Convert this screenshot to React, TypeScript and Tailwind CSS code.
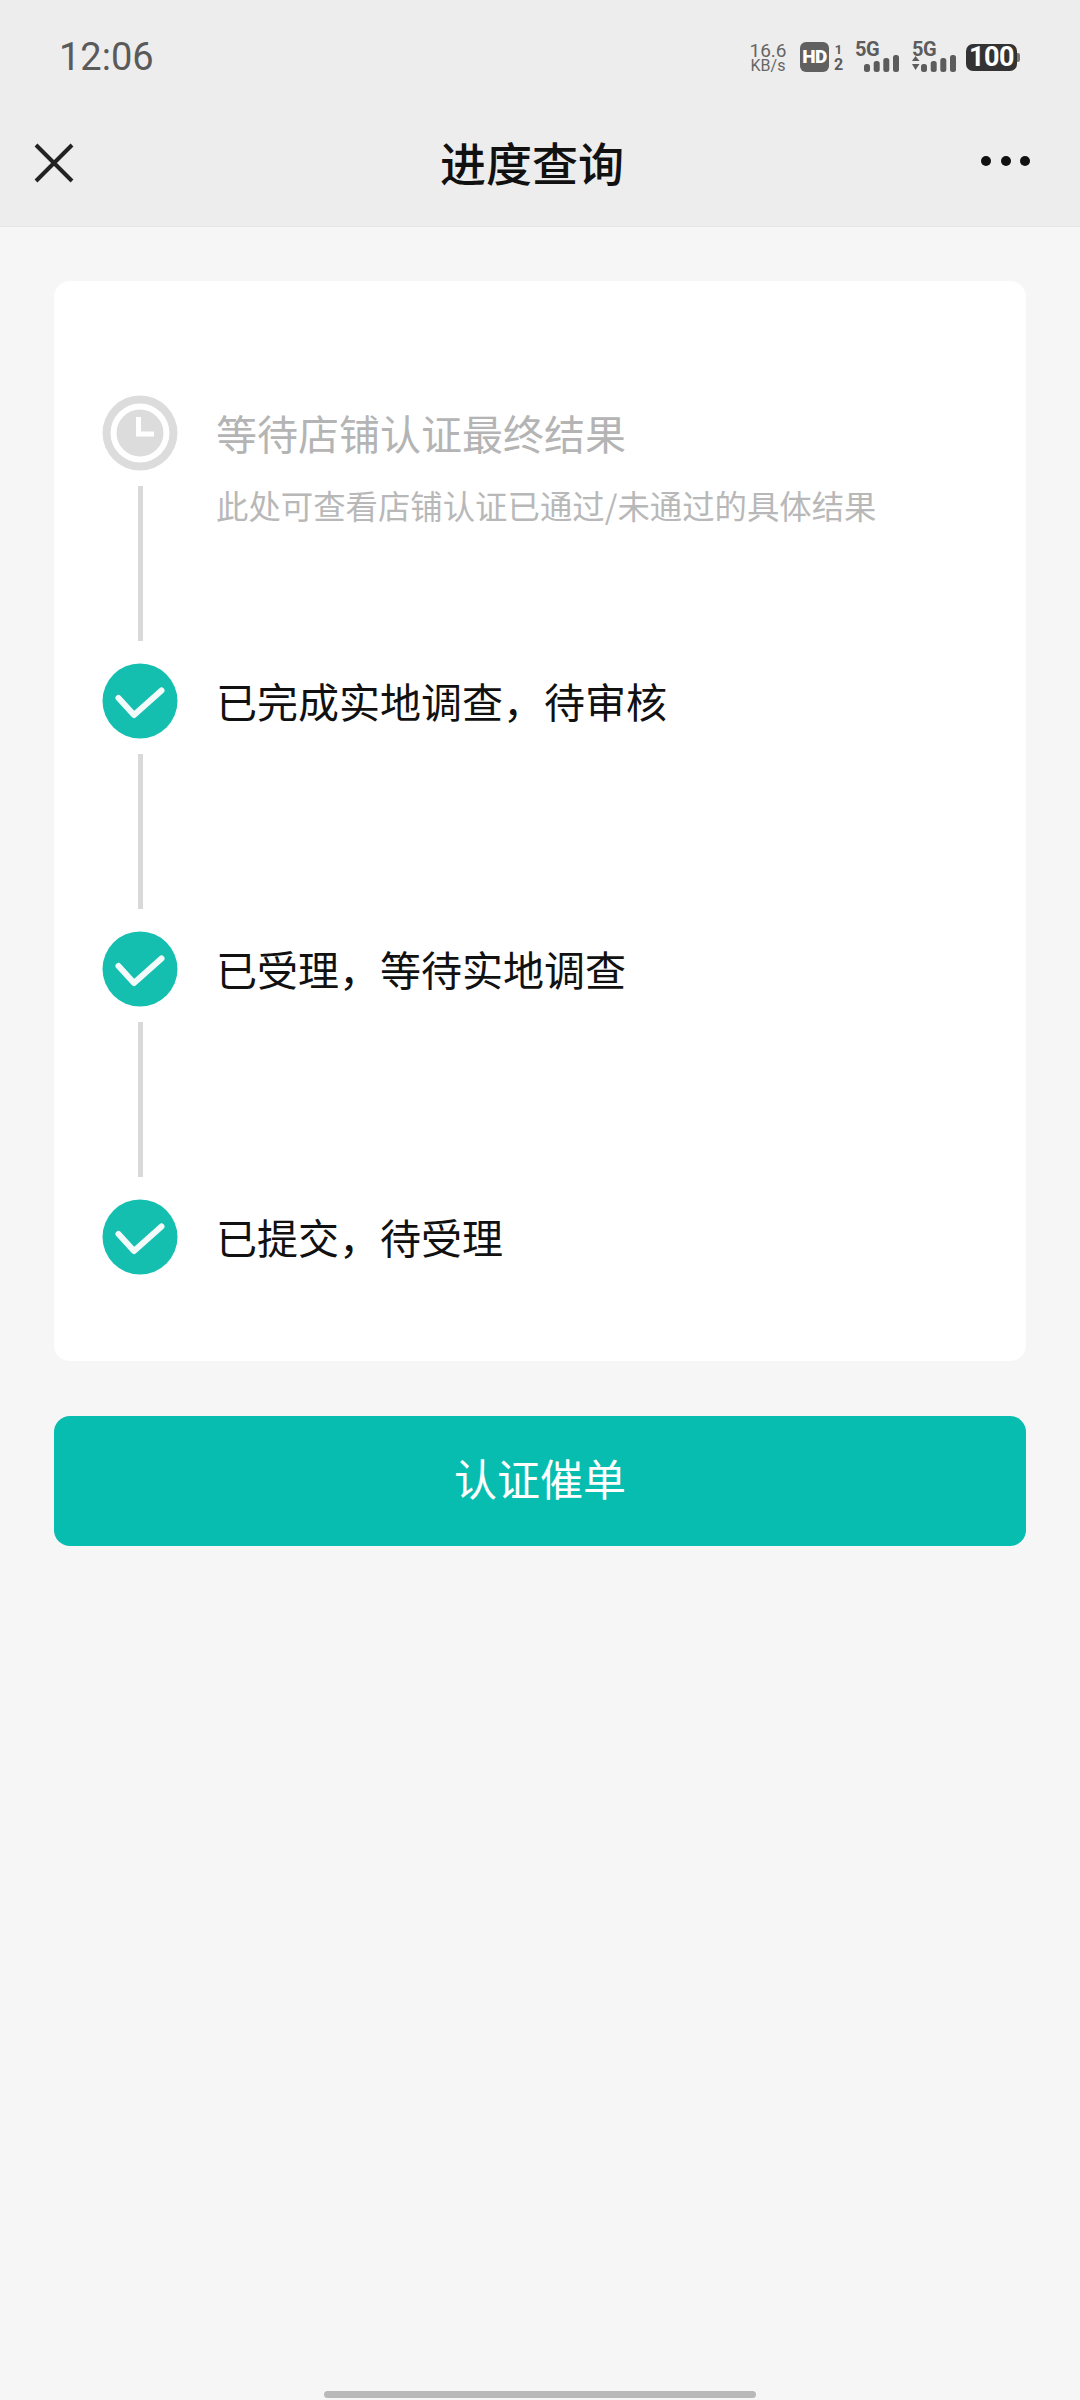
import React from 'react';

const CJK = '[font-family:"Noto_Sans_CJK_SC","Liberation_Sans",sans-serif]';

const Signal: React.FC<{ arrows?: boolean }> = ({ arrows }) => (
  <div className="flex flex-col w-[44px] h-[30px]">
    <div className="h-[14px] text-[20px] leading-[14px] font-bold text-[#5c5c5c] [font-family:Roboto,sans-serif] tracking-[-0.5px]">5G</div>
    <svg width="44" height="17" viewBox="0 0 44 17" className="mt-[-1px]">
      {arrows && (
        <g fill="#5c5c5c">
          <path d="M0 6 L3.5 1 L7.5 6 Z" />
          <path d="M0 9 L7.5 9 L3.5 15 Z" />
        </g>
      )}
      <rect x="9" y="9" width="6" height="8" rx="2.5" fill="#5c5c5c" />
      <rect x="18.7" y="6" width="6" height="11" rx="2.5" fill="#5c5c5c" />
      <rect x="28.3" y="3" width="6" height="14" rx="2.5" fill="#5c5c5c" />
      <rect x="38" y="0" width="6" height="17" rx="2.5" fill="#5c5c5c" />
    </svg>
  </div>
);

const StatusBar: React.FC = () => (
  <div className="h-[114px] flex items-center justify-between pl-[59px] pr-[60px]">
    <span className="text-[38px] leading-none text-[#5a5a5a] [font-family:Roboto,sans-serif]">12:06</span>
    <div className="flex items-center h-[30px]">
      <div className="w-[36px] flex flex-col items-center text-[#666] [font-family:Roboto,sans-serif] leading-none">
        <span className="text-[19px] leading-[17px]">16.6</span>
        <span className="text-[16px] leading-[14px]">KB/s</span>
      </div>
      <div className="ml-[14px] w-[29px] h-[30px] rounded-[6px] bg-[#606060] flex items-center justify-center text-white text-[19px] font-black tracking-[-0.5px] [font-family:Roboto,sans-serif]">
        HD
      </div>
      <div className="ml-[3px] w-[13px] flex flex-col items-center text-[#5c5c5c] font-bold [font-family:Roboto,sans-serif]">
        <span className="text-[13px] leading-[15px]">1</span>
        <span className="text-[16px] leading-[15px]">2</span>
      </div>
      <div className="ml-[10px]">
        <Signal />
      </div>
      <div className="ml-[13px]">
        <Signal arrows />
      </div>
      <div className="ml-[10px] flex items-center">
        <div className="w-[51px] h-[27px] rounded-[7px] bg-[#333] flex items-center justify-center text-white text-[27px] font-bold leading-none tracking-[-0.5px] [font-family:Roboto,sans-serif]">
          100
        </div>
        <div className="w-[3px] h-[9px] rounded-r-[2px] bg-[#777]" />
      </div>
    </div>
  </div>
);

const NavBar: React.FC = () => (
  <div className="h-[113px] flex items-center justify-between relative border-b border-[#e4e4e4] pb-[16px]">
    <svg width="40" height="40" viewBox="0 0 40 40" className="ml-[34px] mt-[2px]" fill="none" stroke="#222" strokeWidth="4">
      <path d="M2 2 L38 38 M38 2 L2 38" />
    </svg>
    <span className={`${CJK} absolute left-0 w-[1064px] text-center text-[46px] leading-none font-medium text-[#111] mt-[-2px]`}>进度查询</span>
    <div className="flex gap-[9.5px] mr-[50px] mt-[-3px]">
      <span className="w-[10px] h-[10px] rounded-full bg-[#111]" />
      <span className="w-[10px] h-[10px] rounded-full bg-[#111]" />
      <span className="w-[10px] h-[10px] rounded-full bg-[#111]" />
    </div>
  </div>
);

const ClockIcon: React.FC = () => (
  <svg width="76" height="76" viewBox="0 0 76 76">
    <circle cx="38" cy="38" r="37.5" fill="#dcdcdc" />
    <circle cx="38" cy="38" r="29.5" fill="#fff" />
    <circle cx="38" cy="38" r="23.5" fill="#dcdcdc" />
    <path d="M36.5 22 V39 H52" fill="none" stroke="#fff" strokeWidth="5" />
  </svg>
);

const CheckIcon: React.FC = () => (
  <svg width="76" height="76" viewBox="0 0 76 76">
    <circle cx="38" cy="38" r="37.5" fill="#14bfb0" />
    <path d="M16.5 35 L32 52 L59.5 27.5" fill="none" stroke="#f3fbfa" strokeWidth="6" strokeLinecap="round" strokeLinejoin="round" />
  </svg>
);

const Connector: React.FC = () => <div className="w-[5px] h-[155px] mt-[15px] mb-[22px] bg-[#d9d9d9]" />;

const steps = [
  { title: '已完成实地调查，待审核', line: true },
  { title: '已受理，等待实地调查', line: true },
  { title: '已提交，待受理', line: false },
];

export default function App() {
  return (
    <div className={`${CJK} w-[1080px] h-[2400px] bg-[#f6f6f6] flex flex-col`}>
      <div className="bg-[#ededed]">
        <StatusBar />
        <NavBar />
      </div>

      <div className="flex-1 flex flex-col px-[54px] pt-[54px] relative">
        <div className="h-[1080px] bg-white rounded-[16px] pt-[114px] pl-[48px]">
          <div className="flex items-start">
            <div className="flex flex-col items-center w-[76px]">
              <ClockIcon />
              <Connector />
            </div>
            <div className="ml-[38px] flex flex-col">
              <span className="text-[41px] leading-[76px] text-[#b4b4b4] mt-[-1px]">等待店铺认证最终结果</span>
              <span className="text-[32.4px] leading-[40px] text-[#b8b8b8] mt-[15px]">此处可查看店铺认证已通过/未通过的具体结果</span>
            </div>
          </div>
          {steps.map((s) => (
            <div key={s.title} className="flex items-start">
              <div className="flex flex-col items-center w-[76px]">
                <CheckIcon />
                {s.line && <Connector />}
              </div>
              <span className="ml-[38px] text-[41px] leading-[76px] text-[#111] mt-[-1px]">{s.title}</span>
            </div>
          ))}
        </div>

        <button className="mt-[55px] h-[130px] pb-[8px] rounded-[16px] bg-[#07bdb0] text-white text-[43px] leading-none flex items-center justify-center">
          认证催单
        </button>

        <div className="mt-auto mb-[2px] mx-auto w-[432px] h-[7px] rounded-full bg-[#b9b9b9]" />
      </div>
    </div>
  );
}
